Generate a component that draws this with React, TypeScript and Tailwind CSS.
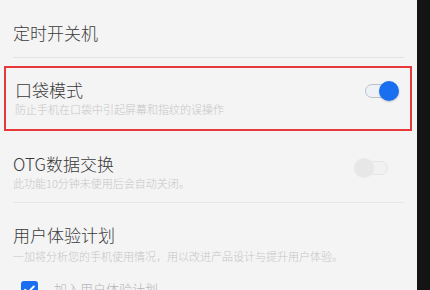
const font = { fontFamily: '"Noto Sans CJK SC", "Noto Sans", sans-serif' };

function Toggle({ on }: { on: boolean }) {
  return (
    <div className="relative h-[20px] w-[34px]">
      <div
        className={
          on
            ? "absolute left-0 top-[3px] h-[14px] w-[30px] rounded-full border border-[#b9c3cf] bg-[#eef2f6]"
            : "absolute left-[4px] top-[3px] h-[14px] w-[30px] rounded-full border border-[#e6e6e6] bg-[#f1f1f1]"
        }
      />
      <div
        className={
          on
            ? "absolute right-0 top-0 h-[20px] w-[20px] rounded-full bg-[#1a6ff0] shadow-[0_1px_2px_rgba(0,0,0,0.2)]"
            : "absolute left-0 top-0 h-[20px] w-[20px] rounded-full bg-[#e7e7e7]"
        }
      />
    </div>
  );
}

export default function App() {
  return (
    <div className="flex h-[290px] w-[430px] overflow-hidden" style={font}>
      <div className="w-[417px] bg-[#f4f4f4]">
        <div className="h-[57px] pl-[13px] pt-[21px]">
          <div className="text-[17px] font-light leading-[24px] text-[#3a3a3a]">定时开关机</div>
        </div>
        <div className="mx-[13px] h-px bg-[#e3e3e5]" />

        <div className="ml-[4px] mr-[5px] mt-[8px] flex items-start justify-between border-2 border-[#e5393b] pb-[13px] pl-[9px] pr-[11px] pt-[10px]">
          <div>
            <div className="text-[17px] font-light leading-[24px] text-[#3a3a3a]">口袋模式</div>
            <div className="text-[11px] font-light leading-[14px] text-[#c6c6c6]">
              防止手机在口袋中引起屏幕和指纹的误操作
            </div>
          </div>
          <div className="mt-[3px]">
            <Toggle on />
          </div>
        </div>

        <div className="flex items-start justify-between pl-[13px] pr-[29px] pt-[21px]">
          <div>
            <div className="text-[17px] font-light leading-[24px] text-[#3a3a3a]">OTG数据交换</div>
            <div className="text-[11px] font-light leading-[14px] text-[#c6c6c6]">
              此功能10分钟未使用后会自动关闭。
            </div>
          </div>
          <div className="mt-[6px]">
            <Toggle on={false} />
          </div>
        </div>
        <div className="mx-[13px] mt-[12px] h-px bg-[#e6e6e6]" />

        <div className="pl-[13px] pt-[20px]">
          <div className="text-[17px] font-light leading-[24px] text-[#3a3a3a]">用户体验计划</div>
          <div className="mt-[2px] text-[11px] font-light leading-[14px] text-[#c6c6c6]">
            一加将分析您的手机使用情况，用以改进产品设计与提升用户体验。
          </div>
          <div className="mt-[17px] flex items-center gap-[16px] pl-[8px]">
            <div className="flex h-[17px] w-[17px] items-center justify-center rounded-[3px] bg-[#1a6ff0]">
              <svg width="13" height="13" viewBox="0 0 24 24" fill="none" stroke="#fff" strokeWidth="3.5" strokeLinecap="round" strokeLinejoin="round">
                <path d="M4 12.5l5 5L20 6.5" />
              </svg>
            </div>
            <div className="text-[13px] font-light leading-[18px] text-[#b5b5b5]">加入用户体验计划</div>
          </div>
        </div>
      </div>
      <div className="flex-1 bg-[#141414]" />
    </div>
  );
}
